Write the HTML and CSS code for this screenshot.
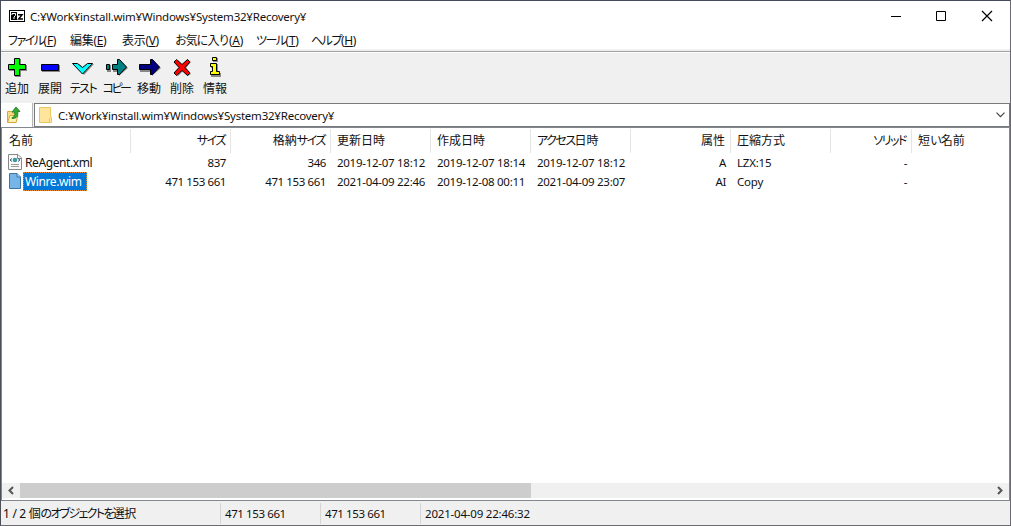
FILE: index.html
```html
<!doctype html>
<html lang="ja">
<head>
	<meta charset="utf-8">
	<title>C:¥Work¥install.wim¥Windows¥System32¥Recovery¥</title>
	<link rel="stylesheet" href="styles.css">
</head>
<body>
<div class="window">
	<div class="titlebar">
		<svg class="app-icon" width="16" height="12" viewBox="0 0 16 12"><path d="M0 0h16v12H0z"/><path fill="#fff" d="M1 1h14v10H1z"/><path d="M2 2h6v8H2z"/><path fill="none" stroke="#fff" d="M3 5V3.500h3.500v2L5 7v2"/><path fill="none" stroke="#000" stroke-width="1.500" d="M9 4.700h4L9.700 9H14"/></svg>
		<span class="path">C:¥Work¥install.wim¥Windows¥System32¥Recovery¥</span>
		<div class="controls">
			<svg width="46" height="30" viewBox="0 0 46 30"><path d="M18 15.500h10" stroke="#000"/></svg>
			<svg width="46" height="30" viewBox="0 0 46 30"><path d="M17.500 10.500h9v9h-9z" fill="none" stroke="#000"/></svg>
			<svg width="46" height="30" viewBox="0 0 46 30"><path d="M17 10l10 10M27 10l-10 10" fill="none" stroke="#000" stroke-width="1.200"/></svg>
		</div>
	</div>
	<div class="menubar">
		<span class="m-file"><span class="kana">ファイル</span>(<u>F</u>)</span>
		<span class="m-edit">編集(<u>E</u>)</span>
		<span class="m-view">表示(<u>V</u>)</span>
		<span class="m-fav"><span class="hira">お気に入り</span>(<u>A</u>)</span>
		<span class="m-tool"><span class="kana">ツール</span>(<u>T</u>)</span>
		<span class="m-help"><span class="kana">ヘルプ</span>(<u>H</u>)</span>
	</div>
	<div class="toolbar">
		<div class="tool">
			<svg width="24" height="24" viewBox="0 0 24 24"><path class="shadow" d="M10 3h6v6h6v6h-6v6h-6v-6H4V9h6z"/><path fill="#0f0" stroke="#000" d="M9.500 2.500h5v6h6v5h-6v6h-5v-6h-6v-5h6z"/></svg>
			<span>追加</span>
		</div>
		<div class="tool">
			<svg width="24" height="24" viewBox="0 0 24 24"><path class="shadow" d="M4 9h18v7H4z"/><path fill="#00f" stroke="#000" d="M3.500 8.500h17v6h-17z"/></svg>
			<span>展開</span>
		</div>
		<div class="tool">
			<svg width="24" height="24" viewBox="0 0 24 24"><path class="shadow" d="M3 8h5l5 4 5-4h5L13 19z"/><path fill="#0ff" stroke="#000" d="M1.500 7.500h5l5 4 5-4h5l-10 10.500z"/></svg>
			<span class="kana">テスト</span>
		</div>
		<div class="tool">
			<svg width="24" height="24" viewBox="0 0 24 24"><path class="shadow" d="M3 9h4v7H3zM9 9h6V4l9 8-9 8v-4H9z"/><path fill="#008080" stroke="#000" d="M2.500 8.500h3v5h-3zM8.500 8.500h5v-5h2l7 7.500-7 7.500h-2v-5h-5z"/></svg>
			<span class="kana tight">コピー</span>
		</div>
		<div class="tool">
			<svg width="24" height="24" viewBox="0 0 24 24"><path class="shadow" d="M3 9h12V4l9 8-9 8v-4H3z"/><path fill="#000080" stroke="#000" d="M2.500 8.500h11v-5h2l7 7.500-7 7.500h-2v-5h-11z"/></svg>
			<span>移動</span>
		</div>
		<div class="tool">
			<svg width="24" height="24" viewBox="0 0 24 24"><path class="shadow" d="M5 6l3-2 5 5 5-5 3 2-5 6 5 6-3 2-5-5-5 5-3-2 5-6z"/><path fill="red" stroke="#000" d="M4 6l2.500-2.500 5.500 5 5.500-5L20 6l-5 5.500 5 5.500-2.500 2.500-5.500-5-5.500 5L4 17l5-5.500z"/></svg>
			<span>削除</span>
		</div>
		<div class="tool">
			<svg width="24" height="24" viewBox="0 0 24 24"><path class="shadow" d="M10 2h5v4h-5zM8 8h7v9h3v4H8v-4h2v-5H8z"/><path fill="#ff0" stroke="#000" d="M9.500 1.500h4v3h-4zM7.500 7.500h6v8h3v3h-9v-3h2v-5h-2z"/></svg>
			<span>情報</span>
		</div>
	</div>
	<div class="addressbar">
		<div class="up">
			<svg width="16" height="18" viewBox="0 0 16 18"><path fill="#f9dc86" stroke="#d9a738" d="M1.500 16V5.500h4l1 1.500h4v9z"/><path fill="#fff0b5" stroke="#d9a738" d="M1.500 16.500l2.500-7h8l-2 7z"/><path fill="#36a935" stroke="#16791a" stroke-width=".8" d="M6 11.500c3-.5 3-3 2.500-5.500H6l4-5 4 4.500-2.300.2c.6 4-.7 7-5.700 6.800z"/></svg>
		</div>
		<div class="combo">
			<svg width="13" height="16" viewBox="0 0 13 16"><path fill="#ffe49c" stroke="#e8c765" d="M.5.500h11v9.500h1v5.500H.5z"/><path stroke="#e8c765" d="M10.500 11v4"/></svg>
			<span class="path">C:¥Work¥install.wim¥Windows¥System32¥Recovery¥</span>
			<svg class="arrow" width="9" height="6" viewBox="0 0 9 6"><path fill="none" stroke="#444" stroke-width="1.200" d="M.5.700l4 4 4-4"/></svg>
		</div>
	</div>
	<div class="list">
		<div class="row head">
			<span class="c-name">名前</span>
			<span class="c num"><span class="kana">サイズ</span></span>
			<span class="c num">格納<span class="kana">サイズ</span></span>
			<span class="c">更新日時</span>
			<span class="c">作成日時</span>
			<span class="c"><span class="kana">アクセス</span>日時</span>
			<span class="c num">属性</span>
			<span class="c">圧縮方式</span>
			<span class="c num solid"><span class="kana">ソリッド</span></span>
			<span class="c last">短<span class="hira">い</span>名前</span>
		</div>
		<div class="row">
			<span class="c-name">
				<svg width="14" height="16" viewBox="0 0 14 16"><path fill="#fafafa" stroke="#888" d="M.5.500h9.500l3.500 3.500v11.500H.5z"/><path fill="none" stroke="#888" d="M9.500.500v4h4"/><circle cx="7" cy="6" r="2.300" fill="#3c9c9c"/><path fill="none" stroke="#345a8a" d="M4 4.500L2 6l2 1.500M10 4.500L12 6l-2 1.500"/><path stroke="#999" d="M3 10.500h8M3 12.500h8"/></svg>
				<span class="file">ReAgent.xml</span>
			</span>
			<span class="c num">837</span>
			<span class="c num">346</span>
			<span class="c date">2019-12-07 18:12</span>
			<span class="c date">2019-12-07 18:14</span>
			<span class="c date">2019-12-07 18:12</span>
			<span class="c num">A</span>
			<span class="c">LZX:15</span>
			<span class="c num solid">-</span>
			<span class="c last"></span>
		</div>
		<div class="row">
			<span class="c-name">
				<svg width="14" height="16" viewBox="0 0 14 16"><path fill="#76b5e8" stroke="#3f759f" d="M1.500.500h7.500l3.500 3.500v11.500h-11z"/><path fill="#a8d4f5" stroke="#3f759f" d="M9 .500V4h3.500"/></svg>
				<span class="file selected">Winre.wim</span>
			</span>
			<span class="c num">471 153 661</span>
			<span class="c num">471 153 661</span>
			<span class="c date">2021-04-09 22:46</span>
			<span class="c date">2019-12-08 00:11</span>
			<span class="c date">2021-04-09 23:07</span>
			<span class="c num">AI</span>
			<span class="c">Copy</span>
			<span class="c num solid">-</span>
			<span class="c last"></span>
		</div>
		<div class="scrollbar">
			<svg width="17" height="15" viewBox="0 0 17 15"><path fill="none" stroke="#555" stroke-width="2" d="M11 4L7.500 7.500 11 11"/></svg>
			<div class="thumb"></div>
			<svg width="17" height="15" viewBox="0 0 17 15"><path fill="none" stroke="#555" stroke-width="2" d="M6 4l3.500 3.500L6 11"/></svg>
		</div>
	</div>
	<div class="statusbar">
		<span class="s-main">1 / 2 個<span class="kana">のオブジェクトを</span>選択</span>
		<span class="s-size">471 153 661</span>
		<span class="s-size">471 153 661</span>
		<span class="s-date">2021-04-09 22:46:32</span>
	</div>
</div>
</body>
</html>
```
FILE: styles.css
```css
* { box-sizing: border-box; }

body {
	margin: 0;
	font-family: "Noto Sans", "Noto Sans CJK JP", sans-serif;
	font-size: 12px;
	color: #111;
	white-space: nowrap;
	overflow: hidden;
}

svg {
	display: block;
	flex: none;
}

.kana {
	font-feature-settings: "palt";
	letter-spacing: -1.5px;
}

.kana.tight { letter-spacing: -2.5px; }

.hira { letter-spacing: -1.2px; }

.window {
	display: flex;
	flex-direction: column;
	width: 1011px;
	height: 526px;
	border: 1px solid #6b6b6f;
	border-top-color: #454b5c;
	border-left-color: #4b5058;
	background: #f0f0f0;
}

.path {
	font-size: 11.5px;
	letter-spacing: -0.22px;
}

/* Title and menu */
.titlebar {
	display: flex;
	align-items: center;
	height: 29px;
	padding-left: 8px;
	background: #fff;
}

.app-icon { margin-right: 5px; }

.titlebar .path { padding-top: 1px; }

.controls {
	display: flex;
	margin-left: auto;
	margin-right: -1px;
}

.menubar {
	display: flex;
	height: 19px;
	line-height: 22px;
	padding-left: 7px;
	letter-spacing: -0.3px;
	background: #fff;
}

.m-file { width: 62px; }
.m-edit { width: 52px; }
.m-view { width: 53px; }
.m-fav { width: 81px; }
.m-tool { width: 55px; }

/* Toolbar */
.toolbar {
	display: flex;
	height: 54px;
	margin-top: 2px;
	border-top: 1px solid #a0a0a0;
	box-shadow: inset 0 1px #fff;
}

.tool {
	display: flex;
	flex-direction: column;
	align-items: center;
	width: 33px;
	padding-top: 4px;
	padding-right: 1px;
	line-height: 18px;
}

.shadow { fill: #888; }

/* Address */
.addressbar {
	display: flex;
	height: 24px;
	margin-top: -2px;
}

.up {
	width: 32px;
	padding: 3px 0 0 5px;
	background: #fff;
	border-right: 1px solid #b5b5b5;
}

.combo {
	display: flex;
	align-items: center;
	flex: 1;
	margin-left: 1px;
	padding: 0 4px;
	background: #fff;
	border: 1px solid #7a7a7a;
}

.combo .path {
	margin-left: 6px;
	padding-top: 1px;
}

.arrow { margin-left: auto; }

/* File list */
.list {
	display: flex;
	flex-direction: column;
	height: 374px;
	background: #fff;
	border: 1px solid #828790;
	overflow: hidden;
}

.row {
	display: flex;
	height: 19px;
	line-height: 19px;
	font-size: 11.5px;
	letter-spacing: -0.2px;
}

.c-name {
	display: flex;
	flex: none;
	width: 129px;
	padding-left: 6px;
}

.c-name svg { margin-top: 1px; }

.c {
	flex: none;
	width: 100px;
	padding-left: 6px;
}

.num {
	padding-left: 0;
	padding-right: 5px;
	text-align: right;
	letter-spacing: -0.4px;
}

.date { letter-spacing: -0.27px; }

.solid { width: 81px; }

.head {
	height: 25px;
	padding-top: 1px;
	font-size: 12px;
	letter-spacing: 0;
}

.head span { line-height: 23px; }
.head .num { letter-spacing: 0; }
.head .c-name { padding-left: 7px; }
.head > span { border-right: 1px solid #e5e5e5; }
.head .last { border: 0; }

.file {
	padding: 0 2px;
	margin-left: 1px;
	font-size: 12px;
	letter-spacing: -0.4px;
}

.selected {
	width: 64px;
	padding: 0 1px;
	line-height: 17px;
	background: #0078d7;
	border: 1px dotted #f28c28;
	color: #fff;
}

.scrollbar {
	display: flex;
	height: 15px;
	margin-top: auto;
	margin-bottom: 2px;
	background: #f0f0f0;
}

.scrollbar .thumb {
	width: 511px;
	margin-left: 1px;
	margin-right: auto;
	background: #cdcdcd;
}

/* Status bar */
.statusbar {
	display: flex;
	flex: 1;
	padding-left: 2px;
	letter-spacing: -0.3px;
}

.statusbar > span {
	height: 21px;
	margin-top: 2px;
	line-height: 22px;
}

.statusbar .kana { letter-spacing: -1.7px; }

.s-main { width: 217px; }

.s-size,
.s-date {
	padding-left: 4px;
	font-size: 11.5px;
	border-left: 1px solid #d5d5d5;
}

.s-size {
	width: 100px;
	letter-spacing: -0.4px;
}

.s-date { letter-spacing: -0.2px; }
```
